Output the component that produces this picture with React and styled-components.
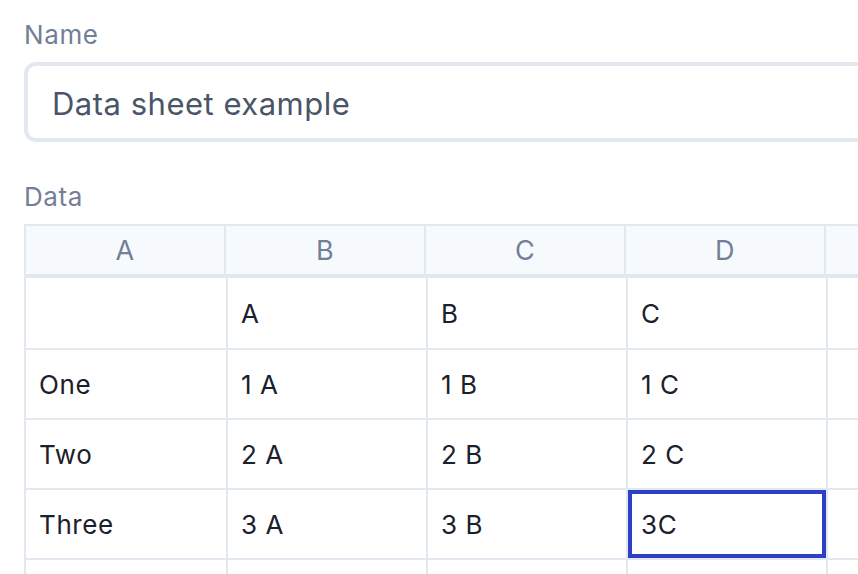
import React from "react";
import styled, { createGlobalStyle } from "styled-components";

const Global = createGlobalStyle`
  html, body {
    margin: 0;
    padding: 0;
    background: #fff;
    overflow: hidden;
  }
  body {
    font-family: Inter, "Noto Sans", sans-serif;
  }
`;

const Page = styled.div`
  width: 1100px;
  padding: 17px 0 0 24px;
`;

const Label = styled.div`
  font-size: 26px;
  line-height: 36px;
  letter-spacing: 0.6px;
  color: #718096;
  margin-bottom: 9px;
`;

const Input = styled.div`
  box-sizing: border-box;
  height: 80px;
  border: 4px solid #e2e8f0;
  border-radius: 12px;
  display: flex;
  align-items: center;
  padding: 2px 24px 0;
  font-size: 31px;
  letter-spacing: 0.5px;
  color: #4a5568;
  margin-bottom: 37px;
`;

const Sheet = styled.div`
  border-top: 2px solid #e2e8f0;
  border-left: 2px solid #e2e8f0;
`;

const HeadRow = styled.div`
  display: grid;
  grid-template-columns: repeat(5, 200px);
  height: 48px;
  background: #f7fafc;
  border-bottom: 4px solid #e2e8f0;
`;

const HeadCell = styled.div`
  border-right: 2px solid #e2e8f0;
  display: flex;
  align-items: center;
  justify-content: center;
  font-size: 27px;
  letter-spacing: 0.4px;
  color: #718096;
`;

const Row = styled.div`
  display: grid;
  grid-template-columns: 202px repeat(4, 200px);
  height: ${(p) => (p.$first ? 70 : 68)}px;
  border-bottom: 2px solid #e2e8f0;
`;

const Cell = styled.div`
  border-right: 2px solid #e2e8f0;
  display: flex;
  align-items: center;
  padding-left: 13px;
  font-size: 26px;
  letter-spacing: 0.6px;
  color: #1a202c;
  box-shadow: ${(p) => (p.$selected ? "inset 0 0 0 4px #2d3ec9" : "none")};
`;

const cols = ["A", "B", "C", "D", ""];
const rows = [
  ["", "A", "B", "C", ""],
  ["One", "1 A", "1 B", "1 C", ""],
  ["Two", "2 A", "2 B", "2 C", ""],
  ["Three", "3 A", "3 B", "3C", ""],
  ["", "", "", "", ""],
];

export default function App() {
  return (
    <>
      <Global />
      <Page>
        <Label>Name</Label>
        <Input>Data sheet example</Input>
        <Label>Data</Label>
        <Sheet>
          <HeadRow>
            {cols.map((c, i) => (
              <HeadCell key={i}>{c}</HeadCell>
            ))}
          </HeadRow>
          {rows.map((r, ri) => (
            <Row key={ri} $first={ri === 0}>
              {r.map((v, ci) => (
                <Cell key={ci} $selected={ri === 3 && ci === 3}>
                  {v}
                </Cell>
              ))}
            </Row>
          ))}
        </Sheet>
      </Page>
    </>
  );
}
